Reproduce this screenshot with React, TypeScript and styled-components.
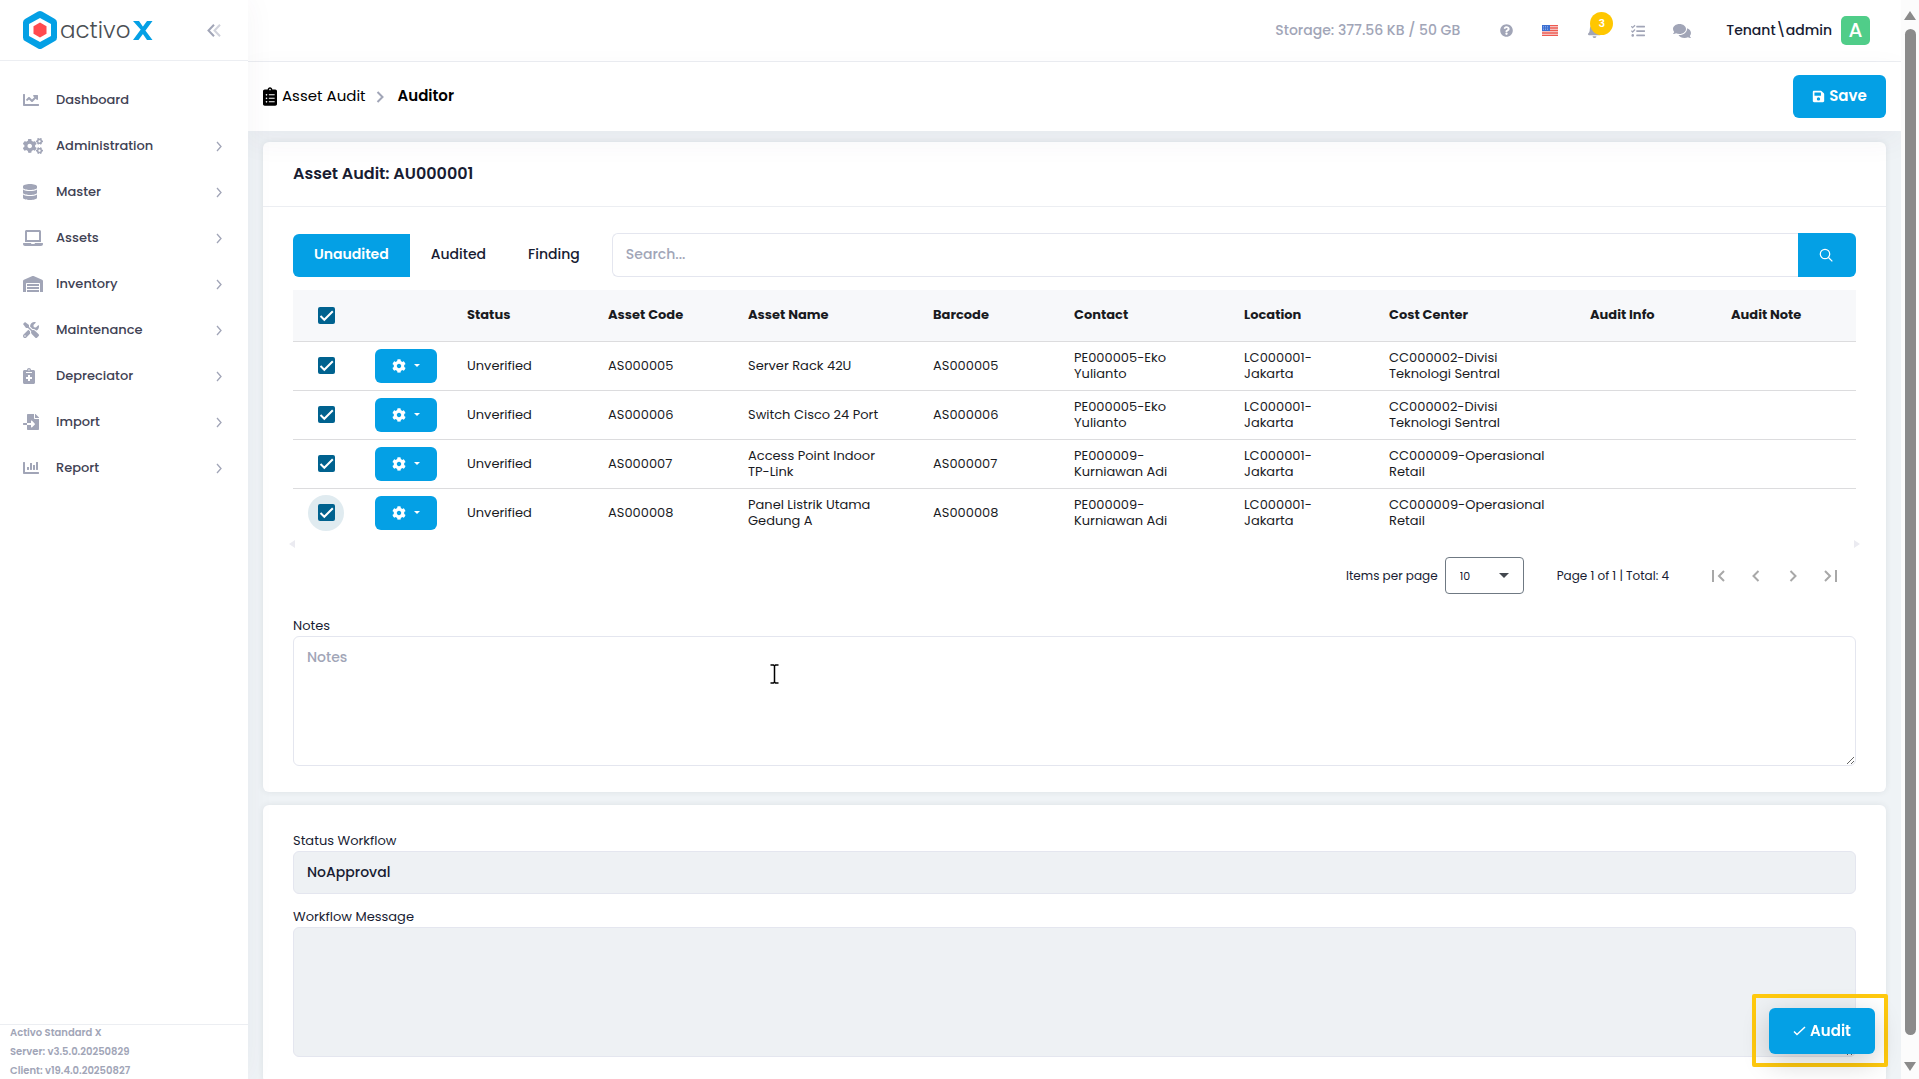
import React from 'react';
import styled, { createGlobalStyle } from 'styled-components';
import {
  FaChartLine, FaCogs, FaDatabase, FaLaptop, FaWarehouse, FaTools, FaNotesMedical,
  FaFileImport, FaChartBar, FaQuestionCircle, FaBell, FaTasks, FaComments,
  FaClipboardList, FaSave, FaCog,
} from 'react-icons/fa';

const blue = '#04a0e5';
const muted = '#a1a5b7';
const ink = '#181c32';
const line = '#eceef2';
const fieldLine = '#e4e6ef';
const disabled = '#eef1f4';

const GlobalStyle = createGlobalStyle`
  *, *::before, *::after { box-sizing: border-box; }
  body {
    margin: 0;
    background: #eff3f6;
    color: ${ink};
    font-family: Poppins, Inter, "Liberation Sans", sans-serif;
    font-size: 13px;
  }
  button, input, select, textarea { font: inherit; color: inherit; }
  button { cursor: pointer; border: 0; padding: 0; background: none; }
  a { color: inherit; text-decoration: none; }
  svg { display: block; flex: none; }
`;

const Shell = styled.div`
  display: grid;
  grid-template-columns: 248px minmax(0, 1fr) 18px;
  height: 100vh;
  overflow: hidden;
`;

const Sidebar = styled.aside`
  display: flex;
  flex-direction: column;
  min-height: 0;
  background: #fff;
  z-index: 2;
  box-shadow: 0 0 28px rgba(82, 63, 105, 0.05);
`;

const Brand = styled.div`
  display: flex;
  align-items: center;
  justify-content: space-between;
  height: 61px;
  padding: 0 27px 0 23px;
  border-bottom: 1px solid ${line};
`;

const BrandLink = styled.a`
  display: flex;
  align-items: center;
  gap: 3px;
  color: #4b4f54;
  font-size: 23px;
  font-weight: 300;
  line-height: 32px;
`;

const CollapseButton = styled.button`
  display: grid;
  place-items: center;
  height: 24px;
`;

const Nav = styled.nav`
  flex: 1;
  padding-top: 16px;
`;

const NavItem = styled.a`
  display: grid;
  grid-template-columns: 33px 1fr 8px;
  align-items: center;
  height: 46px;
  padding: 0 25px 0 23px;
  color: #3f4254;
  font-weight: 500;
  svg { color: ${muted}; }
`;

const Glyph = styled.span<{ $width: number; $height: number }>`
  svg {
    width: ${(p) => p.$width}px;
    height: ${(p) => p.$height}px;
  }
`;

const Version = styled.footer`
  display: flex;
  flex-direction: column;
  gap: 4px;
  height: 55px;
  padding-left: 10px;
  border-top: 1px solid ${line};
  color: ${muted};
  font-size: 10px;
  font-weight: 600;
  line-height: 15px;
  overflow: hidden;
  p { margin: 0; }
`;

const Page = styled.div`
  display: flex;
  flex-direction: column;
  min-width: 0;
  min-height: 0;
  overflow: hidden;
`;

const TopBar = styled.header`
  display: flex;
  flex: none;
  align-items: center;
  justify-content: flex-end;
  height: 62px;
  padding-right: 31px;
  background: #fff;
  border-bottom: 1px solid ${line};
  color: ${muted};
`;

const Storage = styled.span`
  margin-right: 24px;
  font-size: 14px;
  font-weight: 500;
`;

const IconRow = styled.div`
  display: flex;
  align-items: center;
`;

const IconButton = styled.button`
  position: relative;
  display: grid;
  place-items: center;
  width: 44px;
  height: 44px;
  color: ${muted};
`;

const Badge = styled.span`
  position: absolute;
  top: 3px;
  left: 18px;
  width: 23px;
  height: 23px;
  border-radius: 50%;
  background: #ffc700;
  color: #fff;
  font-size: 11px;
  font-weight: 600;
  line-height: 23px;
  text-align: center;
`;

const User = styled.button`
  display: flex;
  align-items: center;
  gap: 9px;
  margin-left: 22px;
  color: ${ink};
  font-size: 14px;
  font-weight: 500;
`;

const Avatar = styled.span`
  width: 29px;
  height: 29px;
  border-radius: 5px;
  background: #50cd89;
  color: #fff;
  font-size: 20px;
  line-height: 29px;
  text-align: center;
`;

const Toolbar = styled.div`
  display: flex;
  flex: none;
  align-items: center;
  justify-content: space-between;
  height: 69px;
  padding: 0 15px;
  background: #fff;
  box-shadow: 0 10px 30px rgba(82, 63, 105, 0.05);
  z-index: 1;
`;

const Crumbs = styled.nav`
  display: flex;
  align-items: center;
  gap: 5px;
  color: #000;
  font-size: 15px;
  a, strong { padding-bottom: 2px; }
`;

const CrumbArrow = styled.span`
  padding: 0 9px 0 5px;
  color: ${muted};
`;

const Current = styled.strong`
  font-weight: 600;
`;

const Primary = styled.button<{ $raised?: boolean }>`
  display: flex;
  align-items: center;
  justify-content: center;
  gap: 4px;
  width: ${(p) => (p.$raised ? 106 : 93)}px;
  height: ${(p) => (p.$raised ? 46 : 43)}px;
  border-radius: 6px;
  background: ${blue};
  color: #fff;
  font-size: 15px;
  font-weight: 600;
  box-shadow: ${(p) => (p.$raised ? '0 8px 28px rgba(0, 0, 0, 0.2)' : 'none')};
  span { padding-bottom: 2px; }
`;

const Content = styled.main`
  display: flex;
  flex-direction: column;
  gap: 13px;
  padding: 11px 15px;
`;

const Card = styled.section`
  flex: none;
  border-radius: 6px;
  background: #fff;
  box-shadow: 0 0 6px rgba(40, 50, 70, 0.09);
`;

const CardHead = styled.h1`
  margin: 0;
  padding: 0 30px;
  height: 65px;
  border-bottom: 1px solid ${line};
  font-size: 16px;
  font-weight: 600;
  line-height: 64px;
`;

const CardBody = styled.div`
  padding: 26px 30px;
`;

const Filters = styled.div`
  display: flex;
  align-items: flex-end;
  margin-bottom: 13px;
`;

const Tab = styled.button<{ $active?: boolean }>`
  height: 43px;
  padding: 0 21px 2px;
  border-radius: 6px 0 0 6px;
  background: ${(p) => (p.$active ? blue : 'none')};
  color: ${(p) => (p.$active ? '#fff' : ink)};
  font-size: 14px;
  font-weight: ${(p) => (p.$active ? 600 : 500)};
`;

const Search = styled.form`
  display: flex;
  flex: 1;
  margin-left: 11px;
`;

const SearchInput = styled.input`
  flex: 1;
  min-width: 0;
  height: 44px;
  padding: 0 13px 2px;
  border: 1px solid ${fieldLine};
  border-right: 0;
  border-radius: 6px 0 0 6px;
  font-size: 14px;
  font-weight: 500;
  outline: 0;
  &::placeholder { color: ${muted}; opacity: 1; }
`;

const SearchButton = styled.button`
  display: grid;
  place-items: center;
  width: 58px;
  padding-right: 2px;
  border-radius: 0 6px 6px 0;
  background: ${blue};
  color: #fff;
`;

const Table = styled.table`
  width: 100%;
  border-collapse: collapse;
  table-layout: fixed;
  color: #1a1b1f;
  line-height: 16px;
`;

const HeadCell = styled.th`
  height: 51px;
  padding: 0 20px 1px 16px;
  background: #f7f8fa;
  border-bottom: 1px solid #dcdcde;
  font-size: 13px;
  font-weight: 700;
  text-align: left;
  white-space: nowrap;
`;

const Cell = styled.td`
  height: 49px;
  padding: 0 20px 0 16px;
  border-bottom: 1px solid #dcdcde;
  font-size: 13px;
  tr:last-child > & { border-bottom: 0; }
`;

const CheckCell = styled(Cell)`
  padding: 0 0 0 15px;
`;

const CheckHead = styled(HeadCell)`
  padding: 0 0 0 15px;
`;

const Tick = styled.label<{ $focus?: boolean }>`
  display: grid;
  place-items: center;
  width: 36px;
  height: 36px;
  border-radius: 50%;
  background: ${(p) => (p.$focus ? '#e0ebf0' : 'none')};
  > * { grid-area: 1 / 1; }
  input {
    appearance: none;
    width: 17px;
    height: 17px;
    margin: 0;
    border-radius: 2px;
    background: #00628f;
  }
  svg { pointer-events: none; }
`;

const RowMenu = styled.button`
  display: flex;
  align-items: center;
  justify-content: center;
  gap: 8px;
  width: 62px;
  height: 34px;
  border-radius: 6px;
  background: ${blue};
  color: #fff;
`;

const ScrollEnds = styled.div`
  display: flex;
  justify-content: space-between;
  margin: 3px -4px 9px;
`;

const Pager = styled.div`
  display: flex;
  align-items: center;
  justify-content: flex-end;
  height: 37px;
  margin-bottom: 22px;
  padding-right: 8px;
  font-size: 12px;
`;

const PageSize = styled.span`
  display: grid;
  align-items: center;
  width: 79px;
  margin: 0 33px 0 7px;
  > * { grid-area: 1 / 1; }
  svg { justify-self: end; margin-right: 15px; pointer-events: none; }
  select {
    appearance: none;
    width: 100%;
    height: 37px;
    padding: 0 14px;
    border: 1px solid #6f7983;
    border-radius: 4px;
    background: #fff;
    font-size: 11px;
  }
`;

const PageCount = styled.span`
  margin-right: 31px;
`;

const PageButton = styled.button`
  display: grid;
  place-items: center;
  width: 37px;
  height: 37px;
  color: #a8a8a8;
`;

const Field = styled.div`
  position: relative;
  display: flex;
  flex-direction: column;
  & + & { margin-top: 13px; }
  label { height: 20px; line-height: 20px; }
`;

const fieldBox = `
  width: 100%;
  padding: 9px 13px;
  border: 1px solid ${fieldLine};
  border-radius: 6px;
  font-size: 14px;
  font-weight: 500;
  line-height: 22px;
  outline: 0;
`;

const TextArea = styled.textarea`
  ${fieldBox}
  display: block;
  height: 130px;
  resize: vertical;
  background: ${(p) => (p.readOnly ? disabled : '#fff')};
  &::placeholder { color: ${muted}; opacity: 1; }
`;

const TextInput = styled.input`
  ${fieldBox}
  height: 43px;
  background: ${disabled};
`;

const Caret = styled.svg`
  position: absolute;
  left: 477px;
  top: 48px;
`;

const AuditFrame = styled.div`
  position: fixed;
  right: 31px;
  bottom: 12px;
  z-index: 3;
  padding: 10px 9px 9px 13px;
  border: 4px solid #ffc90e;
  border-radius: 2px;
`;

const ScrollRail = styled.div`
  display: flex;
  flex-direction: column;
  align-items: center;
  justify-content: space-between;
  gap: 9px;
  padding: 11px 0 8px;
  background: #fcfcfc;
  color: #8b8b8b;
`;

const Thumb = styled.div`
  flex: 1;
  width: 11px;
  margin-bottom: 18px;
  border-radius: 6px;
  background: currentColor;
`;

type StrokeProps = { d: string; w: number; h: number; weight?: number };
const Stroke = ({ d, w, h, weight = 2 }: StrokeProps) => (
  <svg width={w} height={h} viewBox={`0 0 ${w} ${h}`} fill="none" stroke="currentColor" strokeWidth={weight}>
    <path d={d} />
  </svg>
);

const Logo = () => (
  <svg width="34" height="38" viewBox="0 0 34 38">
    <path d="M15 .6Q17-.5 19 .6L32 8Q34 9.200 34 11.500V26.500Q34 29 32 30L19 37.400Q17 38.500 15 37.400L2 30Q0 29 0 26.500V11.500Q0 9 2 8Z" fill={blue} />
    <path d="M17 7L28 13V25L17 31L6 25V13Z" fill="#fff" />
    <path d="M17 11.500L23.500 15.300V22.700L17 26.500L10.500 22.700V15.300Z" fill="#ff4a4f" />
  </svg>
);

const LogoX = () => (
  <svg width="20" height="19" viewBox="0 0 20 19" fill={blue}>
    <path d="M0 0H6L10.500 6.500L8.500 9.500Z M14 0H19.500L5.500 19H0Z M12 9L19.500 19H14L9.500 12.500Z" />
  </svg>
);

const Flag = () => (
  <svg width="16" height="11" viewBox="0 0 16 11">
    <rect width="16" height="11" fill="#f7e3e3" />
    <path d="M0 .7H16M0 3H16M0 5.500H16M0 8H16M0 10.300H16" stroke="#ee5a50" strokeWidth="1.300" />
    <rect width="8" height="6" fill="#3c6fd1" />
    <path d="M1 1.500H7M1 3H7M1 4.500H7" stroke="#9dbbf0" strokeWidth=".7" strokeDasharray="1 1" />
  </svg>
);

const CheckMark = () => (
  <svg width="17" height="17" viewBox="0 0 17 17" fill="none" stroke="#fff" strokeWidth="2">
    <path d="M2.500 9L6.300 12.800L14.800 4.200" />
  </svg>
);

const menu = [
  { label: 'Dashboard', Icon: FaChartLine, width: 16, leaf: true },
  { label: 'Administration', Icon: FaCogs, width: 20 },
  { label: 'Master', Icon: FaDatabase, width: 14 },
  { label: 'Assets', Icon: FaLaptop, width: 20 },
  { label: 'Inventory', Icon: FaWarehouse, width: 20 },
  { label: 'Maintenance', Icon: FaTools, width: 16 },
  { label: 'Depreciator', Icon: FaNotesMedical, width: 12 },
  { label: 'Import', Icon: FaFileImport, width: 16 },
  { label: 'Report', Icon: FaChartBar, width: 16 },
];

const columns = [
  ['', 66], ['', 92], ['Status', 141], ['Asset Code', 140], ['Asset Name', 185], ['Barcode', 141],
  ['Contact', 170], ['Location', 145], ['Cost Center', 201], ['Audit Info', 141], ['Audit Note', 141],
] as const;

const assets = [
  { code: 'AS000005', name: ['Server Rack 42U'], contact: ['PE000005-Eko', 'Yulianto'], cost: ['CC000002-Divisi', 'Teknologi Sentral'] },
  { code: 'AS000006', name: ['Switch Cisco 24 Port'], contact: ['PE000005-Eko', 'Yulianto'], cost: ['CC000002-Divisi', 'Teknologi Sentral'] },
  { code: 'AS000007', name: ['Access Point Indoor', 'TP-Link'], contact: ['PE000009-', 'Kurniawan Adi'], cost: ['CC000009-Operasional', 'Retail'] },
  { code: 'AS000008', name: ['Panel Listrik Utama', 'Gedung A'], contact: ['PE000009-', 'Kurniawan Adi'], cost: ['CC000009-Operasional', 'Retail'] },
];

const Lines = ({ of }: { of: string[] }) => (
  <>
    {of.map((text, i) => (
      <React.Fragment key={i}>{i > 0 && <br />}{text}</React.Fragment>
    ))}
  </>
);

export default function App() {
  return (
    <>
      <GlobalStyle />
      <Shell>
        <Sidebar>
          <Brand>
            <BrandLink href="#"><Logo /><span>activo</span><LogoX /></BrandLink>
            <CollapseButton aria-label="Collapse menu">
              <svg width="14" height="13" viewBox="0 0 14 13" fill="none" stroke={muted} strokeWidth="2">
                <path d="M7 .7L1.500 6.500L7 12.300" />
                <path d="M13 .7L7.500 6.500L13 12.300" opacity=".5" />
              </svg>
            </CollapseButton>
          </Brand>
          <Nav>
            {menu.map(({ label, Icon, width, leaf }) => (
              <NavItem href="#" key={label}>
                <Glyph $width={width} $height={16}><Icon /></Glyph>
                <span>{label}</span>
                {!leaf && <Stroke d="M2 1L6 5.500L2 10" w={8} h={11} weight={1.3} />}
              </NavItem>
            ))}
          </Nav>
          <Version>
            <p>Activo Standard X</p>
            <p>Server: v3.5.0.20250829</p>
            <p>Client: v19.4.0.20250827</p>
          </Version>
        </Sidebar>

        <Page>
          <TopBar>
            <Storage>Storage: 377.56 KB / 50 GB</Storage>
            <IconRow>
              <IconButton aria-label="Help"><FaQuestionCircle size={13} /></IconButton>
              <IconButton aria-label="Language"><Flag /></IconButton>
              <IconButton aria-label="Notifications"><FaBell size={15} /><Badge>3</Badge></IconButton>
              <IconButton aria-label="Tasks"><FaTasks size={14} /></IconButton>
              <IconButton aria-label="Chat"><FaComments size={18} /></IconButton>
            </IconRow>
            <User><span>Tenant\admin</span><Avatar>A</Avatar></User>
          </TopBar>
          <Toolbar>
            <Crumbs aria-label="Breadcrumb">
              <Glyph $width={14} $height={19}><FaClipboardList /></Glyph>
              <a href="#">Asset Audit</a>
              <CrumbArrow><Stroke d="M1.500 1L6.500 6L1.500 11" w={8} h={12} /></CrumbArrow>
              <Current>Auditor</Current>
            </Crumbs>
            <Primary><FaSave size={13} /><span>Save</span></Primary>
          </Toolbar>

          <Content>
            <Card>
              <CardHead>Asset Audit: AU000001</CardHead>
              <CardBody>
                <Filters>
                  <Tab $active>Unaudited</Tab>
                  <Tab>Audited</Tab>
                  <Tab>Finding</Tab>
                  <Search onSubmit={(e) => e.preventDefault()}>
                    <SearchInput aria-label="Search" placeholder="Search..." />
                    <SearchButton aria-label="Search">
                      <svg width="14" height="14" viewBox="0 0 14 14" fill="none" stroke="currentColor" strokeWidth="1.200">
                        <circle cx="6" cy="6" r="4.700" />
                        <path d="M9.500 9.500L13.300 13.300" />
                      </svg>
                    </SearchButton>
                  </Search>
                </Filters>

                <Table>
                  <colgroup>
                    {columns.map(([, w], i) => <col key={i} width={w} />)}
                  </colgroup>
                  <thead>
                    <tr>
                      <CheckHead><Tick><input type="checkbox" defaultChecked aria-label="Select all" /><CheckMark /></Tick></CheckHead>
                      {columns.slice(1).map(([label], i) => <HeadCell key={i}>{label}</HeadCell>)}
                    </tr>
                  </thead>
                  <tbody>
                    {assets.map((a, i) => (
                      <tr key={a.code}>
                        <CheckCell>
                          <Tick $focus={i === 3}>
                            <input type="checkbox" defaultChecked aria-label={`Select ${a.code}`} /><CheckMark />
                          </Tick>
                        </CheckCell>
                        <Cell>
                          <RowMenu aria-label={`Actions for ${a.code}`}>
                            <FaCog size={14} />
                            <svg width="6" height="3" viewBox="0 0 6 3" fill="#fff"><path d="M0 0H6L3 3Z" /></svg>
                          </RowMenu>
                        </Cell>
                        <Cell>Unverified</Cell>
                        <Cell>{a.code}</Cell>
                        <Cell><Lines of={a.name} /></Cell>
                        <Cell>{a.code}</Cell>
                        <Cell><Lines of={a.contact} /></Cell>
                        <Cell><Lines of={['LC000001-', 'Jakarta']} /></Cell>
                        <Cell><Lines of={a.cost} /></Cell>
                        <Cell />
                        <Cell />
                      </tr>
                    ))}
                  </tbody>
                </Table>
                <ScrollEnds>
                  <svg width="6" height="8" viewBox="0 0 6 8" fill="#ebebf1"><path d="M6 0V8L0 4Z" /></svg>
                  <svg width="6" height="8" viewBox="0 0 6 8" fill="#ebebf1"><path d="M0 0V8L6 4Z" /></svg>
                </ScrollEnds>

                <Pager>
                  <label htmlFor="page-size">Items per page</label>
                  <PageSize>
                    <select id="page-size" defaultValue="10"><option>10</option><option>25</option></select>
                    <svg width="10" height="5" viewBox="0 0 10 5" fill="#43474e"><path d="M0 0H10L5 5Z" /></svg>
                  </PageSize>
                  <PageCount>Page 1 of 1 | Total: 4</PageCount>
                  <PageButton aria-label="First page"><Stroke d="M1 0V12M12 1L7 6L12 11" w={14} h={12} /></PageButton>
                  <PageButton aria-label="Previous page"><Stroke d="M6.500 1L1.500 6L6.500 11" w={8} h={12} /></PageButton>
                  <PageButton aria-label="Next page"><Stroke d="M1.500 1L6.500 6L1.500 11" w={8} h={12} /></PageButton>
                  <PageButton aria-label="Last page"><Stroke d="M2 1L7 6L2 11M13 0V12" w={14} h={12} /></PageButton>
                </Pager>

                <Field>
                  <label htmlFor="notes">Notes</label>
                  <TextArea id="notes" placeholder="Notes" />
                  <Caret width="9" height="20" viewBox="0 0 9 20" fill="none" stroke="#000" strokeWidth="1.500">
                    <path d="M.5 1H3.500L4.500 2L5.500 1H8.500M4.500 2V18M.5 19H3.500L4.500 18L5.500 19H8.500" />
                  </Caret>
                </Field>
              </CardBody>
            </Card>

            <Card>
              <CardBody>
                <Field>
                  <label htmlFor="status">Status Workflow</label>
                  <TextInput id="status" readOnly value="NoApproval" />
                </Field>
                <Field>
                  <label htmlFor="message">Workflow Message</label>
                  <TextArea id="message" readOnly />
                </Field>
              </CardBody>
            </Card>
          </Content>
        </Page>

        <ScrollRail aria-hidden="true">
          <svg width="12" height="9" viewBox="0 0 12 9" fill="currentColor"><path d="M6 0L12 9H0Z" /></svg>
          <Thumb />
          <svg width="12" height="9" viewBox="0 0 12 9" fill="currentColor"><path d="M6 9L12 0H0Z" /></svg>
        </ScrollRail>
      </Shell>
      <AuditFrame>
        <Primary $raised>
          <Stroke d="M1 5.500L4 8.500L12 1" w={13} h={10} weight={1.5} />
          <span>Audit</span>
        </Primary>
      </AuditFrame>
    </>
  );
}
